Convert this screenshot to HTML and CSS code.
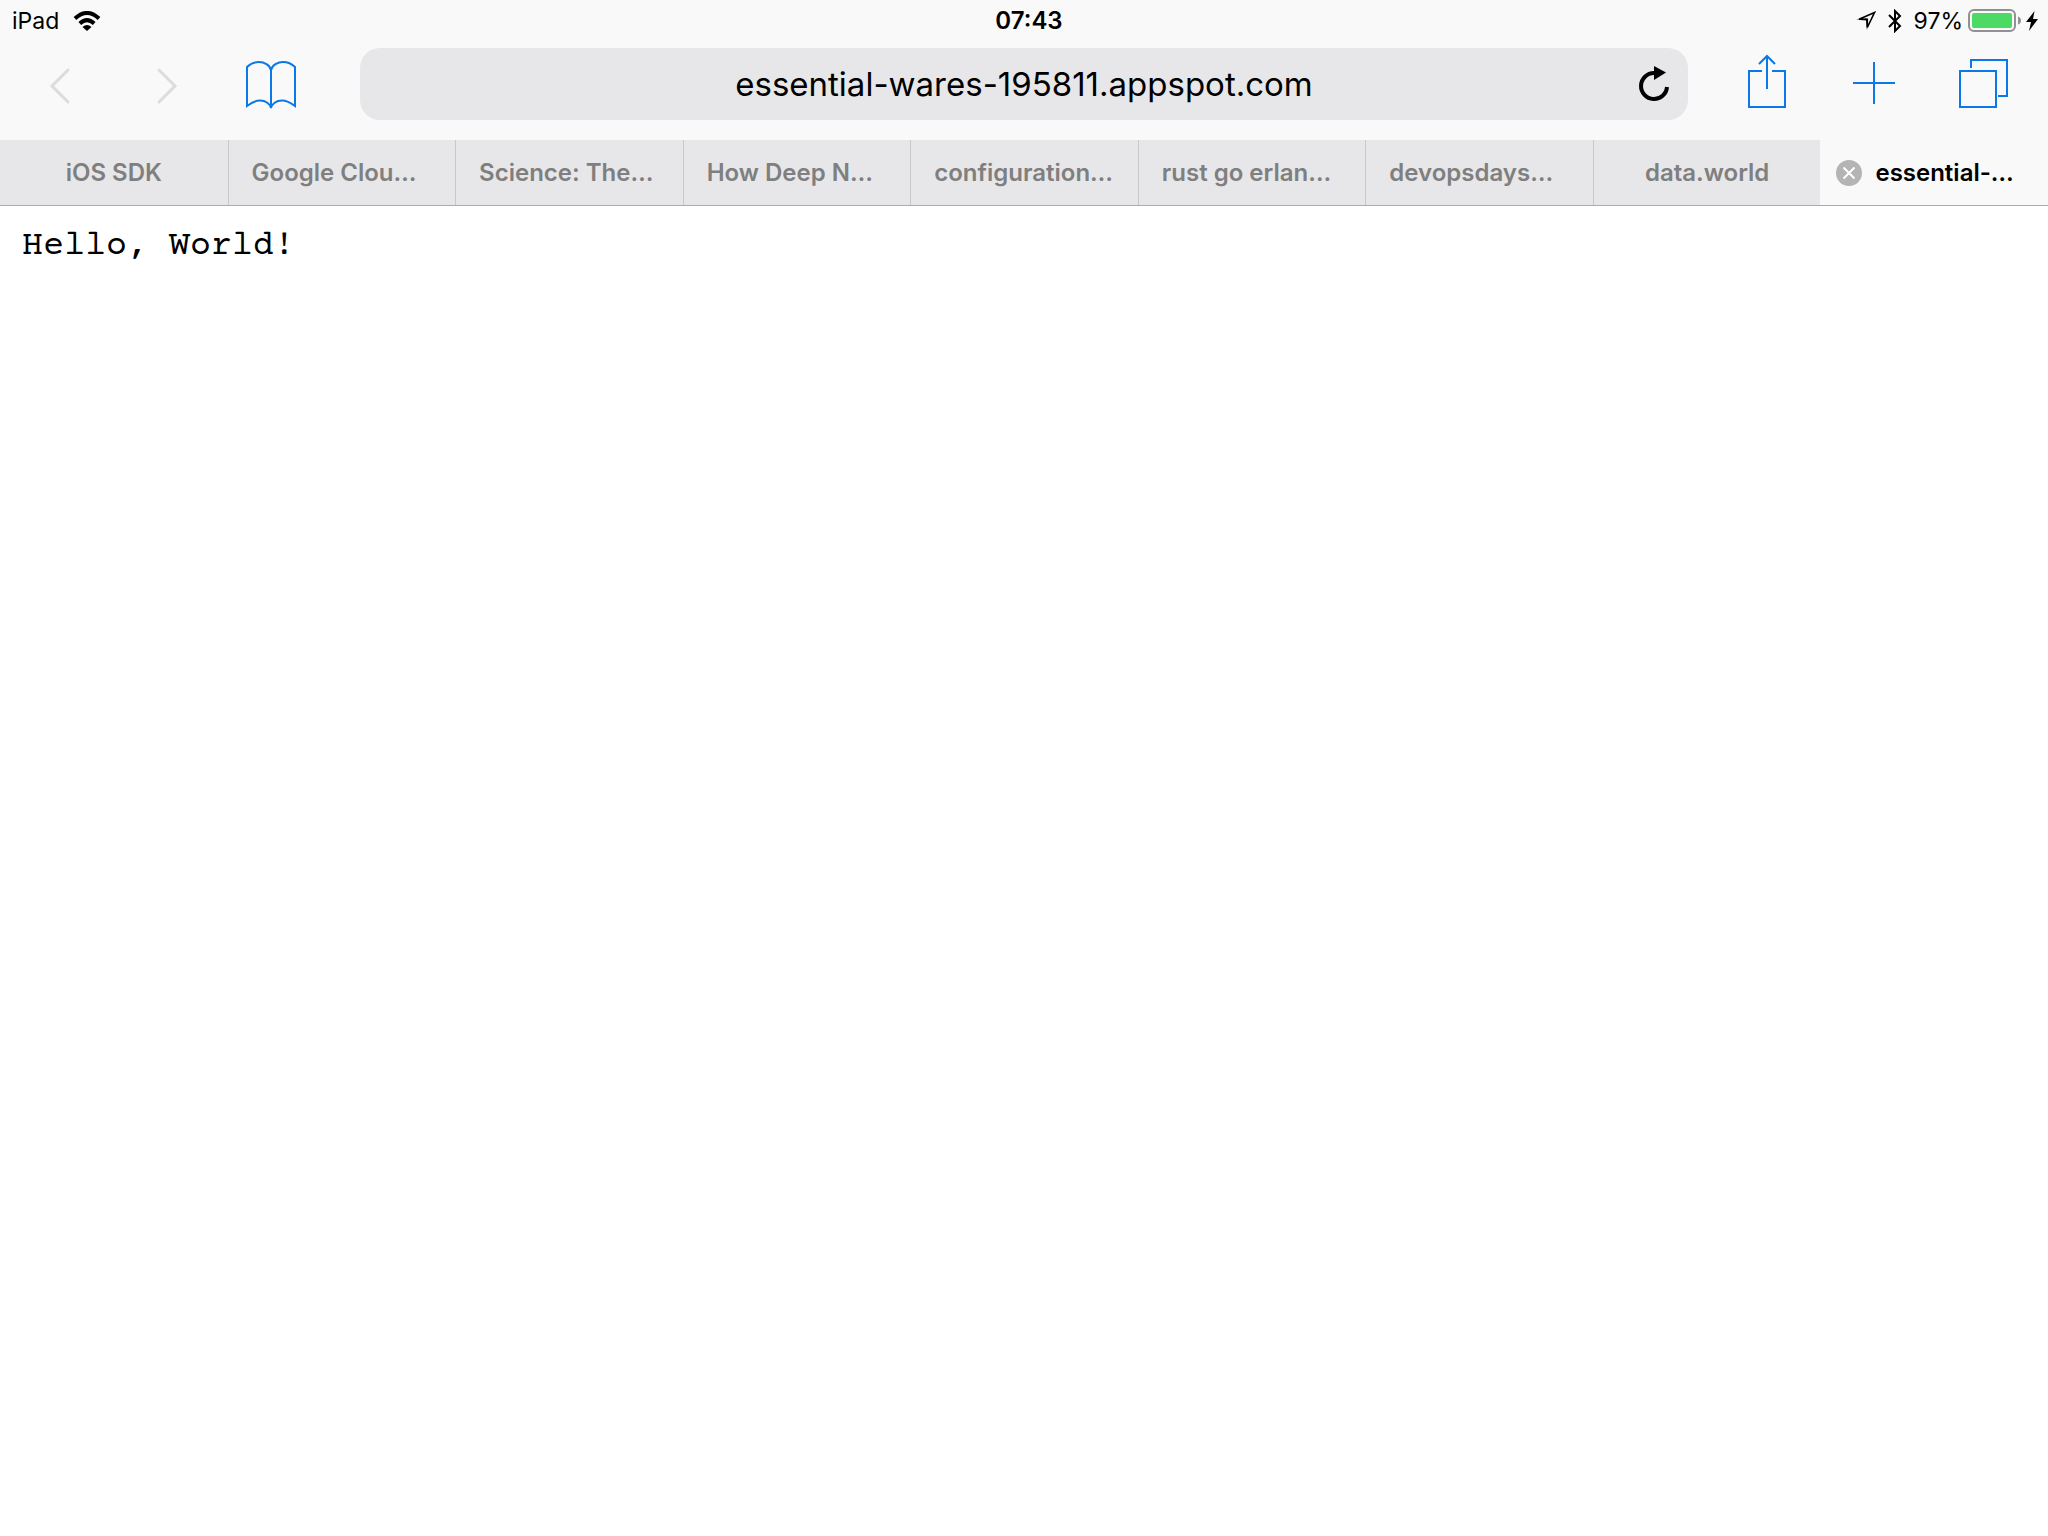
FILE: index.html
```
<!DOCTYPE html>
<html lang="en">
<head>
<meta charset="utf-8">
<title>essential-wares-195811.appspot.com</title>
<link rel="stylesheet" href="styles.css">
</head>
<body>
<header class="chrome">
  <div class="status">
    <div class="status-side">
      <span>iPad</span>
      <svg class="wifi" width="28" height="20" viewBox="0 0 28 20" aria-label="Wi-Fi">
        <path d="M2 7.500Q14-3.500 26 7.500M6.800 12.400Q14 6 21.200 12.400" fill="none" stroke="#000" stroke-width="4"/>
        <path d="M9.500 16Q14 12 18.500 16L14 20Z"/>
      </svg>
    </div>
    <time class="clock">07:43</time>
    <div class="status-side status-end">
      <svg width="20" height="20" viewBox="0 0 20 20" aria-label="Location">
        <path d="M18.500 1.500L3 8.200H11.300V16.500Z" fill="none" stroke="#000" stroke-width="1.600"/>
        <path d="M0 8.700L11 7.500L11 9.500ZM10 9L12 9L11 19.500Z"/>
      </svg>
      <svg class="bluetooth" width="14" height="24" viewBox="0 0 14 24" aria-label="Bluetooth">
        <path d="M1 6L12 17L7 22V2L12 7L1 18" fill="none" stroke="#000" stroke-width="2"/>
      </svg>
      <span class="percent">97%</span>
      <svg class="battery" width="54" height="24" viewBox="0 0 54 24" aria-label="Battery">
        <rect x="1" y="1" width="46" height="21" rx="5" fill="none" stroke="#919193" stroke-width="2"/>
        <rect x="4" y="4" width="40" height="15" rx="2" fill="#4cd964"/>
        <path d="M50 7.500Q53 8.500 53 11.500T50 15.500Z" fill="#919193"/>
      </svg>
      <svg class="bolt" width="12" height="20" viewBox="0 0 12 20" aria-label="Charging">
        <path d="M8.500 0L0 11H5L3 20L12 8H7Z"/>
      </svg>
    </div>
  </div>

  <div class="toolbar">
    <div class="tools">
      <button class="tool" aria-label="Back" disabled><svg class="icon pale" viewBox="0 0 60 72"><path d="M38 22L22 38L38 54"/></svg></button>
      <button class="tool" aria-label="Forward" disabled><svg class="icon pale" viewBox="0 0 60 72"><path d="M23 22L39 38L23 54"/></svg></button>
      <button class="tool" aria-label="Bookmarks"><svg class="icon" viewBox="0 0 60 72"><path d="M29 60V22C28 17 22 14 17 14C12 14 8 16 5 19V58C9 55 14 52.500 18 52.500C24 52.500 28 56 29 60C30 56 34 52.500 40 52.500C44 52.500 49 55 53 58V19C50 16 46 14 41 14C36 14 30 17 29 22"/></svg></button>
    </div>
    <form class="address">
      <input class="url" type="text" aria-label="Address" value="essential-wares-195811.appspot.com">
      <button class="reload" type="button" aria-label="Reload"><svg class="icon" viewBox="0 0 60 72"><path class="ring" d="M43 39A13 13 0 1 1 30 25"/><path class="head" d="M30 18L42 24.500L30 32Z"/></svg></button>
    </form>
    <div class="tools tools-end">
      <button class="tool" aria-label="Share"><svg class="icon" viewBox="0 0 60 72"><path d="M25 23H12V59H48V23H35M30 41V8M22 16L30 8L38 16"/></svg></button>
      <button class="tool" aria-label="New tab"><svg class="icon" viewBox="0 0 60 72"><path d="M29 14V56M8 35H50"/></svg></button>
      <button class="tool" aria-label="Show tabs"><svg class="icon" viewBox="0 0 60 72"><path d="M7 23H43V59H7ZM18 20V12H54V48H45"/></svg></button>
    </div>
  </div>

  <nav class="tabs" aria-label="Open tabs">
    <button class="tab centered">iOS SDK</button>
    <button class="tab">Google Clou…</button>
    <button class="tab">Science: The…</button>
    <button class="tab">How Deep N…</button>
    <button class="tab">configuration…</button>
    <button class="tab">rust go erlan…</button>
    <button class="tab">devopsdays…</button>
    <button class="tab centered">data.world</button>
    <div class="tab active">
      <button class="close" aria-label="Close tab"><svg width="26" height="26" viewBox="0 0 26 26"><circle cx="13" cy="13" r="13" fill="#b4b4b5"/><path d="M7.500 7.500L18.500 18.500M18.500 7.500L7.500 18.500" stroke="#fff" stroke-width="2"/></svg></button>
      <button class="title">essential-…</button>
    </div>
  </nav>
</header>
<main class="page"><pre class="text">Hello, World!</pre></main>
</body>
</html>
```
FILE: styles.css
```
* { box-sizing: border-box; }

body {
  margin: 0;
  background: #fff;
  color: #000;
  font-family: Inter, "Liberation Sans", sans-serif;
}

button {
  margin: 0;
  padding: 0;
  border: 0;
  background: none;
  color: inherit;
  font: inherit;
}

svg { display: block; flex: none; }

.chrome { background: #f9f9f9; }

.status {
  display: grid;
  grid-template-columns: 1fr auto 1fr;
  align-items: center;
  height: 40px;
  padding: 2px 10px 0 12px;
  font-size: 23px;
  line-height: 28px;
}

.status-side { display: flex; align-items: center; }
.status-end { justify-content: flex-end; }
.wifi { margin-left: 14px; }
.clock { padding-left: 8px; font-size: 24px; font-weight: 600; }
.bluetooth { margin-left: 12px; }
.percent { margin: 0 5px 0 12px; }
.bolt { margin-left: 4px; }

.toolbar {
  display: grid;
  grid-template-columns: 360px 1fr 360px;
  padding: 8px 0 20px;
}

.tools { display: flex; padding: 0 35px 0 7px; }
.tools-end { padding: 0 11px 0 25px; }

.tool {
  display: flex;
  flex: 1;
  justify-content: center;
}

.icon {
  width: 60px;
  height: 72px;
  fill: none;
  stroke: #0a78e6;
  stroke-width: 2;
}

.pale {
  stroke: #dcdcdd;
  stroke-width: 3;
  stroke-linecap: round;
}

.address {
  display: flex;
  margin: 0;
  padding-left: 68px;
  border-radius: 20px;
  background: #e7e7e9;
}

.url {
  flex: 1;
  min-width: 0;
  padding: 0;
  border: 0;
  outline: 0;
  background: none;
  color: #000;
  font: 33px/72px Inter, "Liberation Sans", sans-serif;
  text-align: center;
}

.reload {
  display: flex;
  justify-content: center;
  width: 68px;
}

.ring { stroke: #000; stroke-width: 4; }
.head { fill: #000; stroke: none; }

.tabs {
  display: grid;
  grid-template-columns: repeat(9, 1fr);
  height: 66px;
  border-bottom: 1px solid #acacae;
  font-size: 24px;
  font-weight: 600;
}

.tab {
  min-width: 0;
  padding: 0 0 0 23px;
  overflow: hidden;
  border-left: 1px solid #c7c7cc;
  background: #e7e7e9;
  color: #7f7f80;
  text-align: left;
  white-space: nowrap;
}

.tab:first-child { border-left: 0; }
.centered { padding: 0; text-align: center; }

.active {
  display: flex;
  align-items: center;
  gap: 13px;
  padding: 0 0 0 16px;
  border-left: 0;
  background: #f9f9f9;
  color: #000;
}

.page { padding: 22px; }

.text {
  margin: 0;
  font: 35px/38px "Courier Prime", "Liberation Mono", monospace;
}
```
